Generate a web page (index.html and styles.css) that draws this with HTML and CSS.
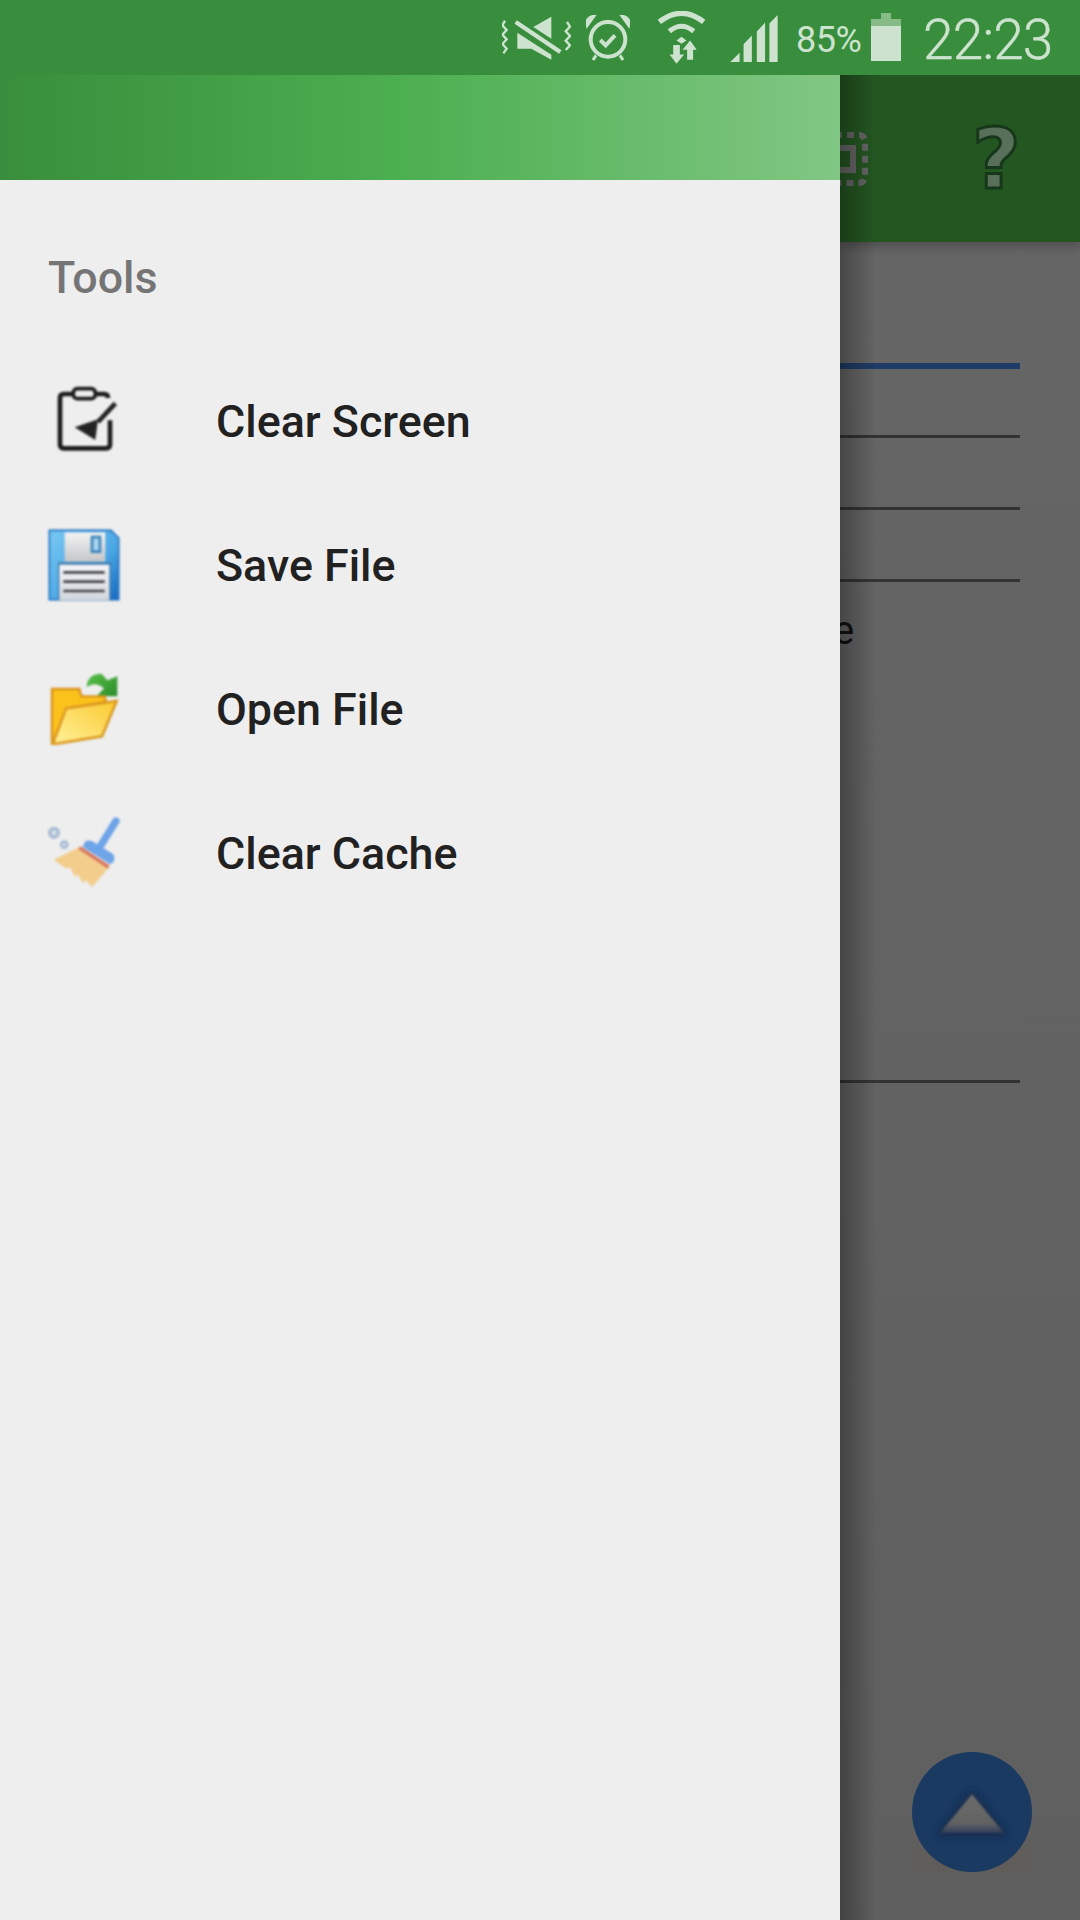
FILE: index.html
```html
<!DOCTYPE html>
<html lang="en">
<head>
    <meta charset="UTF-8">
    <meta name="viewport" content="width=device-width, initial-scale=1.0">
    <title>Tools</title>
    <link rel="stylesheet" href="styles.css">
</head>

<body>
    <!-- status bar -->
    <div class="status-bar">
        <svg class="st-mute" viewBox="35 45 207 135">
            <path d="M44 62l-8 14 13 14-13 14 13 14-13 14 13 14-10 14M230 66l9 14-13 14 13 14-13 14 13 14-13 14" fill="none" stroke="#cde3cf" stroke-width="7"/>
            <path d="M183 50v66l-54-35zM81 98l102 66v15l-60-33H81z" fill="#cde3cf"/>
            <path d="M76 66l134 90" stroke="#cde3cf" stroke-width="13"/>
        </svg>
        <svg class="st-alarm" viewBox="288 45 132 138">
            <circle cx="354" cy="118" r="52" fill="none" stroke="#cde3cf" stroke-width="12"/>
            <path d="M292 76q-6-22 20-28zM416 76q6-22-20-28zM318 166l-9 14M390 166l9 14" fill="#cde3cf" stroke="#cde3cf" stroke-width="9"/>
            <path d="M331 120l16 16 28-30" fill="none" stroke="#cde3cf" stroke-width="12"/>
        </svg>
        <svg class="st-wifi" viewBox="505 33 148 160">
            <path d="M512 66q67-52 134 0" fill="none" stroke="#cde3cf" stroke-width="16"/>
            <path d="M542 94q37-30 74 0" fill="none" stroke="#cde3cf" stroke-width="15"/>
            <path d="M564 122l15-11 15 11-15 10z" fill="#cde3cf"/>
            <path d="M554 136h20v28h13l-23 28-21-28h11zM596 180v-30h-14l23-28 20 28h-11v30z" fill="#cde3cf"/>
        </svg>
        <svg class="st-signal" viewBox="725 44 143 142">
            <path d="M725 186l28-28v28zM765 186v-54l25-26v80zM805 186V94l25-27v119zM843 186V70l25-26v142z" fill="#cde3cf"/>
        </svg>
        <span class="st-percent">85%</span>
        <div class="st-battery">
            <div class="st-battery-nub"></div>
            <div class="st-battery-band"></div>
            <div class="st-battery-fill"></div>
        </div>
        <span class="st-time">22:23</span>
    </div>

    <div class="stage">
        <!-- drawer -->
        <div class="drawer">
            <div class="drawer-header"></div>
            <div class="drawer-body">
                <div class="drawer-title">Tools</div>

                <div class="drawer-item">
                    <svg class="item-icon" viewBox="54 45 216 216">
                        <path d="M234 84q0-12-12-12H102q-12 0-12 12v139q0 12 12 12h126q12 0 12-12v-72" fill="none" stroke="#1c1c1c" stroke-width="14"/>
                        <rect x="130" y="56" width="66" height="30" rx="12" fill="#eee" stroke="#1c1c1c" stroke-width="11"/>
                        <path d="M134 172l70-24-8 62z" fill="#222"/>
                        <path d="M204 156l52-56" stroke="#222" stroke-width="14"/>
                    </svg>
                    <span>Clear Screen</span>
                </div>

                <div class="drawer-item">
                    <svg class="item-icon" viewBox="54 474 216 216">
                        <defs>
                            <linearGradient id="discBlue" x1="0" y1="0" x2="1" y2="1">
                                <stop offset="0" stop-color="#78c8f2"/>
                                <stop offset="0.6" stop-color="#4aa6e4"/>
                                <stop offset="1" stop-color="#1668c0"/>
                            </linearGradient>
                            <linearGradient id="discTop" x1="0" y1="0" x2="0" y2="1">
                                <stop offset="0" stop-color="#f4f4f4"/>
                                <stop offset="1" stop-color="#c4c6c8"/>
                            </linearGradient>
                            <linearGradient id="discLabel" x1="0" y1="0" x2="0" y2="1">
                                <stop offset="0" stop-color="#f4f4f6"/>
                                <stop offset="1" stop-color="#d4d6de"/>
                            </linearGradient>
                        </defs>
                        <path d="M58 478h185l23 23v185H58z" fill="url(#discBlue)" stroke="#2373c4" stroke-width="5"/>
                        <rect x="104" y="484" width="122" height="88" fill="url(#discTop)"/>
                        <rect x="182" y="494" width="32" height="52" fill="#3f86bd"/>
                        <rect x="190" y="502" width="16" height="36" fill="#a8d4ee"/>
                        <rect x="84" y="574" width="158" height="114" fill="#3c78a8"/>
                        <rect x="88" y="581" width="150" height="107" fill="url(#discLabel)"/>
                        <path d="M100 604h124M100 632h124M100 660h124" stroke="#44444c" stroke-width="8"/>
                    </svg>
                    <span>Save File</span>
                </div>

                <div class="drawer-item">
                    <svg class="item-icon" viewBox="54 66 216 216">
                        <defs>
                            <linearGradient id="folderFront" x1="0" y1="1" x2="1" y2="0">
                                <stop offset="0" stop-color="#fff29c"/>
                                <stop offset="1" stop-color="#fbc92f"/>
                            </linearGradient>
                            <linearGradient id="arrowGreen" x1="0" y1="0" x2="1" y2="1">
                                <stop offset="0" stop-color="#58c04a"/>
                                <stop offset="1" stop-color="#2c8c2a"/>
                            </linearGradient>
                        </defs>
                        <path d="M170 108q2-40 45-40l17 20 30-12v60h-62l22-24q-27-22-52-4z" fill="url(#arrowGreen)"/>
                        <path d="M66 282V114h82l6 22h70l4 16-120 22-28 100z" fill="#fcc21c" stroke="#d9931c" stroke-width="7"/>
                        <path d="M68 280l40-108 152-22-44 106z" fill="url(#folderFront)" stroke="#dc9a22" stroke-width="8"/>
                    </svg>
                    <span>Open File</span>
                </div>

                <div class="drawer-item">
                    <svg class="item-icon" viewBox="54 500 216 216">
                        <circle cx="72" cy="547" r="13" fill="#d6dfe9" stroke="#a6bad2" stroke-width="10"/>
                        <circle cx="103" cy="583" r="9" fill="#d6dfe9" stroke="#a6bad2" stroke-width="8"/>
                        <path d="M258 512l-46 74" stroke="#6ea4e8" stroke-width="22" stroke-linecap="round"/>
                        <path d="M72 628l76-38 90 60-52 60-18-20-10 8-14-24-10 4-14-26-14 2z" fill="#f2cd8c"/>
                        <path d="M148 592l88 58" stroke="#d8735c" stroke-width="10"/>
                        <path d="M162 580q6-14 24-8l64 40q6 8 0 24l-10 6-82-52z" fill="#6ea4e8"/>
                    </svg>
                    <span>Clear Cache</span>
                </div>
            </div>
        </div>

        <!-- app behind the drawer, dimmed -->
        <div class="backdrop">
            <div class="app-bar">
                <svg class="bar-select" viewBox="0 0 54 54">
                    <rect x="3" y="3" width="48" height="48" rx="6" fill="none" stroke="#666" stroke-width="6" stroke-dasharray="7 5"/>
                    <rect x="15" y="16" width="24" height="22" fill="none" stroke="#666" stroke-width="6"/>
                </svg>
                <span class="bar-help">?</span>
            </div>
            <div class="rows">
                <div class="row row-active"></div>
                <div class="row"></div>
                <div class="row"></div>
                <div class="row"></div>
                <div class="row row-tall"><span class="row-text">e</span></div>
            </div>
            <div class="fab">
                <svg class="fab-arrow" viewBox="0 0 120 120">
                    <defs>
                        <filter id="fabHalo" x="-30%" y="-30%" width="160%" height="160%">
                            <feGaussianBlur stdDeviation="5"/>
                        </filter>
                        <filter id="fabSoft">
                            <feGaussianBlur stdDeviation="1"/>
                        </filter>
                        <linearGradient id="fabTri" x1="0" y1="0" x2="0" y2="1">
                            <stop offset="0" stop-color="#6b6b6b"/>
                            <stop offset="0.75" stop-color="#636363"/>
                            <stop offset="1" stop-color="#2e3c58"/>
                        </linearGradient>
                    </defs>
                    <path d="M60 38L96 84H24z" fill="#12264a" filter="url(#fabHalo)"/>
                    <path d="M60 42L92 81H28z" fill="url(#fabTri)" filter="url(#fabSoft)"/>
                </svg>
            </div>
        </div>
    </div>
</body>
</html>
```
FILE: styles.css
```css
html, body {
    margin: 0;
    padding: 0;
}

body {
    width: 1080px;
    height: 1920px;
    display: flex;
    flex-direction: column;
    overflow: hidden;
    background: #646464;
    font-family: Roboto, "Liberation Sans", sans-serif;
}

/* status bar */
.status-bar {
    height: 75px;
    flex-shrink: 0;
    display: flex;
    align-items: flex-start;
    background: #388e3c;
    color: #cde3cf;
    padding-left: 502px;
    box-sizing: border-box;
}

.status-bar svg {
    display: block;
    flex-shrink: 0;
}

.st-mute {
    width: 69px;
    height: 45px;
    margin-top: 15px;
}

.st-alarm {
    width: 44px;
    height: 46px;
    margin-top: 15px;
    margin-left: 15px;
}

.st-wifi {
    width: 49px;
    height: 53px;
    margin-top: 11px;
    margin-left: 27px;
}

.st-signal {
    width: 48px;
    height: 47px;
    margin-top: 15px;
    margin-left: 24px;
}

.st-percent {
    width: 66px;
    margin-left: 18px;
    margin-top: 19px;
    font-size: 36px;
    line-height: 42px;
    letter-spacing: -0.5px;
    white-space: nowrap;
}

.st-battery {
    width: 30px;
    height: 48px;
    margin-left: 9px;
    margin-top: 13px;
    display: flex;
    flex-direction: column;
    align-items: center;
}

.st-battery-nub {
    width: 10px;
    height: 6px;
    background: #86bb88;
}

.st-battery-band {
    width: 30px;
    height: 7px;
    background: #86bb88;
}

.st-battery-fill {
    width: 30px;
    flex: 1;
    background: #cde3cf;
}

.st-time {
    margin-left: 22px;
    margin-top: 8px;
    font-size: 55px;
    font-weight: 300;
    line-height: 64px;
    letter-spacing: -0.8px;
    white-space: nowrap;
    -webkit-text-stroke: 0.4px #cde3cf;
}

/* main area */
.stage {
    flex: 1;
    display: flex;
    min-height: 0;
}

.drawer {
    width: 840px;
    flex-shrink: 0;
    display: flex;
    flex-direction: column;
    background: #eeeeee;
}

.drawer-header {
    height: 105px;
    background: linear-gradient(to right, #388e3c, #4caf50 48%, #81c784);
}

.drawer-body {
    padding-top: 25px;
}

.drawer-title {
    height: 144px;
    display: flex;
    align-items: center;
    padding-left: 48px;
    font-size: 44.8px;
    font-weight: 500;
    color: #757575;
}

.drawer-item {
    height: 144px;
    display: flex;
    align-items: center;
    gap: 96px;
    padding-left: 48px;
    font-size: 44.8px;
    font-weight: 500;
    color: #212121;
}

.item-icon {
    width: 72px;
    height: 72px;
    flex-shrink: 0;
    filter: blur(0.8px);
}

/* dimmed app */
.backdrop {
    position: relative;
    isolation: isolate;
    flex: 1;
    min-width: 0;
    overflow: hidden;
    display: flex;
    flex-direction: column;
    background: linear-gradient(#666666, #5f5f5f);
}

/* drawer shadow */
.backdrop::before {
    content: "";
    position: absolute;
    top: 0;
    bottom: 0;
    left: 0;
    width: 36px;
    z-index: 2;
    background: linear-gradient(to right, rgba(0, 0, 0, 0.3), rgba(0, 0, 0, 0));
}

.app-bar {
    height: 167px;
    flex-shrink: 0;
    display: flex;
    align-items: center;
    background: #245622;
    box-shadow: 0 4px 10px rgba(0, 0, 0, 0.25);
}

.bar-select {
    width: 54px;
    height: 54px;
    flex-shrink: 0;
    margin-left: -26px;
}

.bar-help {
    margin-left: 104px;
    font-family: "DejaVu Sans", sans-serif;
    font-size: 84px;
    font-weight: 700;
    line-height: 100px;
    color: #58705a;
    -webkit-text-stroke: 3px #17371a;
}

.rows {
    margin-right: 60px;
}

.row {
    height: 69px;
    border-bottom: 3px solid #333333;
}

.row-active {
    height: 121px;
    margin-bottom: -3px;
    border-bottom: 6px solid #1f3c66;
}

.row-tall {
    height: 498px;
    overflow: hidden;
}

.row-text {
    display: block;
    margin-left: -7px;
    margin-top: 23px;
    font-family: Roboto, "Liberation Sans", sans-serif;
    font-size: 40px;
    line-height: 52px;
    color: #111111;
}

.fab {
    position: absolute;
    left: 72px;
    top: 1677px;
    width: 120px;
    height: 120px;
    border-radius: 50%;
    background: #1a3a62;
}

.fab::before {
    content: "";
    position: absolute;
    inset: 55% 0 0 0;
    z-index: -1;
    background: linear-gradient(rgba(96, 84, 66, 0), rgba(96, 84, 66, 0.2));
}

.fab-arrow {
    display: block;
    width: 120px;
    height: 120px;
}
```
